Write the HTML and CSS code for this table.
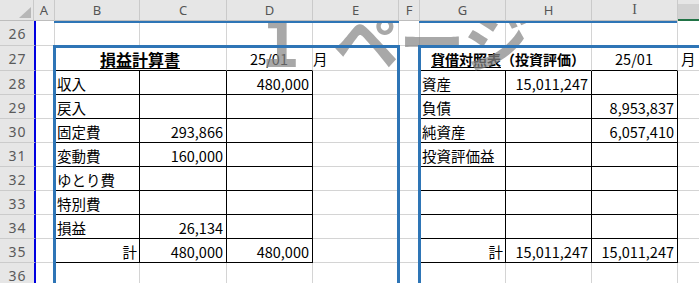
FILE: index.html
```html
<!DOCTYPE html>
<html lang="ja">
<head>
<meta charset="utf-8">
<title>Sheet</title>
<link rel="stylesheet" href="styles.css">
</head>
<body>
<div class="sheet">
  <div class="hdr">
    <div class="hc corner"><svg class="tri" width="12" height="11" viewBox="0 0 12 11"><polygon points="0,11 12,11 12,0" fill="#b7b7b7"/></svg></div>
    <div class="hc ca">A</div>
    <div class="hc cb">B</div>
    <div class="hc cc">C</div>
    <div class="hc cd">D</div>
    <div class="hc ce">E</div>
    <div class="hc cf">F</div>
    <div class="hc cg">G</div>
    <div class="hc ch">H</div>
    <div class="hc ci serif">I</div>
    <div class="hc cj sel"></div>
  </div>

  <div class="row r26">
    <div class="rh">26</div>
    <div class="cl ca"></div><div class="cl cb"></div><div class="cl cc"></div><div class="cl cd"></div><div class="cl ce"></div>
    <div class="cl cf"></div><div class="cl cg"></div><div class="cl ch"></div><div class="cl ci"></div><div class="cl cj"></div>
  </div>

  <div class="row r27">
    <div class="rh">27</div>
    <div class="cl ca"></div>
    <div class="cl cbc bb ctr ttl1">損益計算書</div>
    <div class="cl cd bb ctr">25/01</div>
    <div class="cl ce mo1">月</div>
    <div class="cl cf"></div>
    <div class="cl cgh bb ctr ttl2"><span class="ul">貸借対照表</span>（投資評価）</div>
    <div class="cl ci bb ctr">25/01</div>
    <div class="cl cj mo2">月</div>
  </div>

  <div class="row">
    <div class="rh">28</div>
    <div class="cl ca"></div>
    <div class="cl cb bk">収入</div><div class="cl cc bk r"></div><div class="cl cd bk r">480,000</div>
    <div class="cl ce"></div><div class="cl cf"></div>
    <div class="cl cg bk">資産</div><div class="cl ch bk r">15,011,247</div><div class="cl ci bk r"></div>
    <div class="cl cj"></div>
  </div>

  <div class="row">
    <div class="rh">29</div>
    <div class="cl ca"></div>
    <div class="cl cb bk">戻入</div><div class="cl cc bk r"></div><div class="cl cd bk r"></div>
    <div class="cl ce"></div><div class="cl cf"></div>
    <div class="cl cg bk">負債</div><div class="cl ch bk r"></div><div class="cl ci bk r">8,953,837</div>
    <div class="cl cj"></div>
  </div>

  <div class="row">
    <div class="rh">30</div>
    <div class="cl ca"></div>
    <div class="cl cb bk">固定費</div><div class="cl cc bk r">293,866</div><div class="cl cd bk r"></div>
    <div class="cl ce"></div><div class="cl cf"></div>
    <div class="cl cg bk">純資産</div><div class="cl ch bk r"></div><div class="cl ci bk r">6,057,410</div>
    <div class="cl cj"></div>
  </div>

  <div class="row">
    <div class="rh">31</div>
    <div class="cl ca"></div>
    <div class="cl cb bk">変動費</div><div class="cl cc bk r">160,000</div><div class="cl cd bk r"></div>
    <div class="cl ce"></div><div class="cl cf"></div>
    <div class="cl cg bk">投資評価益</div><div class="cl ch bk r"></div><div class="cl ci bk r"></div>
    <div class="cl cj"></div>
  </div>

  <div class="row">
    <div class="rh">32</div>
    <div class="cl ca"></div>
    <div class="cl cb bk">ゆとり費</div><div class="cl cc bk r"></div><div class="cl cd bk r"></div>
    <div class="cl ce"></div><div class="cl cf"></div>
    <div class="cl cg bk"></div><div class="cl ch bk r"></div><div class="cl ci bk r"></div>
    <div class="cl cj"></div>
  </div>

  <div class="row">
    <div class="rh">33</div>
    <div class="cl ca"></div>
    <div class="cl cb bk">特別費</div><div class="cl cc bk r"></div><div class="cl cd bk r"></div>
    <div class="cl ce"></div><div class="cl cf"></div>
    <div class="cl cg bk"></div><div class="cl ch bk r"></div><div class="cl ci bk r"></div>
    <div class="cl cj"></div>
  </div>

  <div class="row">
    <div class="rh">34</div>
    <div class="cl ca"></div>
    <div class="cl cb bk">損益</div><div class="cl cc bk r">26,134</div><div class="cl cd bk r"></div>
    <div class="cl ce"></div><div class="cl cf"></div>
    <div class="cl cg bk"></div><div class="cl ch bk r"></div><div class="cl ci bk r"></div>
    <div class="cl cj"></div>
  </div>

  <div class="row">
    <div class="rh">35</div>
    <div class="cl ca"></div>
    <div class="cl cb bk r sum">計</div><div class="cl cc bk r">480,000</div><div class="cl cd bk r">480,000</div>
    <div class="cl ce"></div><div class="cl cf"></div>
    <div class="cl cg bk r sum">計</div><div class="cl ch bk r">15,011,247</div><div class="cl ci bk r">15,011,247</div>
    <div class="cl cj"></div>
  </div>

  <div class="row">
    <div class="rh">36</div>
    <div class="cl ca"></div><div class="cl cb"></div><div class="cl cc"></div><div class="cl cd"></div><div class="cl ce"></div>
    <div class="cl cf"></div><div class="cl cg"></div><div class="cl ch"></div><div class="cl ci"></div><div class="cl cj"></div>
  </div>

  <div class="wm">1 ページ</div>
  <div class="thin thin1"></div>
  <div class="thin thin2"></div>
  <div class="page page1"></div>
  <div class="page page2"></div>
</div>
</body>
</html>
```

FILE: styles.css
```css
html, body {
  margin: 0;
  padding: 0;
  background: #ffffff;
}

.sheet {
  position: relative;
  width: 699px;
  height: 283px;
  overflow: hidden;
  background: #ffffff;
  font-family: "Noto Sans CJK JP", "Noto Sans", sans-serif;
  color: #000000;
}

/* column header */
.hdr {
  position: relative;
  z-index: 3;
  display: flex;
  height: 21px;
  background: #e6e6e6;
}

.hc {
  box-sizing: border-box;
  height: 21px;
  border-right: 1px solid #cacaca;
  border-bottom: 1px solid #bdbdbd;
  display: flex;
  align-items: center;
  justify-content: center;
  font-family: "Noto Sans", sans-serif;
  font-size: 13px;
  color: #555555;
  padding-bottom: 1px;
}

.hc.corner {
  width: 34px;
  flex: none;
  justify-content: flex-end;
  align-items: flex-end;
  padding: 0 2px 2px 0;
}

.tri {
  display: block;
}

.hc.ca { width: 21px; }
.hc.serif {
  font-family: "Liberation Serif", serif;
  font-size: 14px;
}

.hc.sel {
  border-right: none;
  border-bottom: 2px solid #217346;
  background: linear-gradient(#e6e6e6 0 4px, #d2d2d2 4px);
}

/* rows */
.row {
  display: flex;
  height: 24px;
}

.row.r26,
.row.r27 {
  height: 25px;
}

.rh {
  box-sizing: border-box;
  width: 36px;
  flex: none;
  background: #e6e6e6;
  border-right: 2px solid #0000e0;
  border-bottom: 1px solid #cbcbcb;
  display: flex;
  align-items: center;
  justify-content: center;
  font-family: "Noto Sans", sans-serif;
  font-size: 14px;
  letter-spacing: 1px;
  color: #5a5a5a;
  padding: 1px 0 0 1px;
}

.cl {
  box-sizing: border-box;
  border-right: 1px solid #d4d4d4;
  border-bottom: 1px solid #d4d4d4;
  display: flex;
  align-items: center;
  padding: 1px 3px 0 2px;
  font-size: 14.5px;
  white-space: nowrap;
  overflow: visible;
}

/* column widths */
.ca { width: 19px; flex: none; }
.cb { width: 85px; flex: none; }
.cc { width: 87px; flex: none; }
.cd { width: 86px; flex: none; }
.ce { width: 86px; flex: none; }
.cf { width: 21px; flex: none; }
.cg { width: 86px; flex: none; }
.ch { width: 86px; flex: none; }
.ci { width: 86px; flex: none; }
.cj { flex: 1; border-right: none; }
.cbc { width: 172px; flex: none; }
.cgh { width: 172px; flex: none; }

/* borders */
.bk {
  border-right-color: #000000;
  border-bottom-color: #000000;
}

.bb {
  border-bottom-color: #000000;
}

.r { justify-content: flex-end; }
.ctr { justify-content: center; }
.sum { padding-right: 2px; }

.mo1 { padding-left: 0; }
.mo2 { padding-left: 3px; }

.ttl1 {
  font-weight: 700;
  font-size: 16px;
  text-decoration: underline;
  text-underline-offset: 2px;
}

.ttl2 {
  font-weight: 700;
  font-size: 14px;
  padding-left: 8px;
}

.ul {
  text-decoration: underline;
  text-underline-offset: 2px;
}

/* watermark (page number overlay) */
.wm {
  position: absolute;
  z-index: 1;
  left: 261px;
  top: 5px;
  font-size: 66px;
  line-height: 66px;
  font-weight: 700;
  white-space: nowrap;
  word-spacing: 18px;
  color: rgba(135, 135, 135, 0.72);
  pointer-events: none;
}

/* page break preview lines */
.thin {
  position: absolute;
  z-index: 4;
  top: 21px;
  height: 2px;
  background: #2e75b6;
}

.thin1 { left: 54px; width: 345px; }
.thin2 { left: 419px; width: 258px; }

.page {
  position: absolute;
  z-index: 4;
  top: 45px;
  bottom: -10px;
  box-sizing: border-box;
  border: 3px solid #2e75b6;
}

.page1 {
  left: 53px;
  width: 347px;
}

.page2 {
  left: 418px;
  right: -10px;
}
```
